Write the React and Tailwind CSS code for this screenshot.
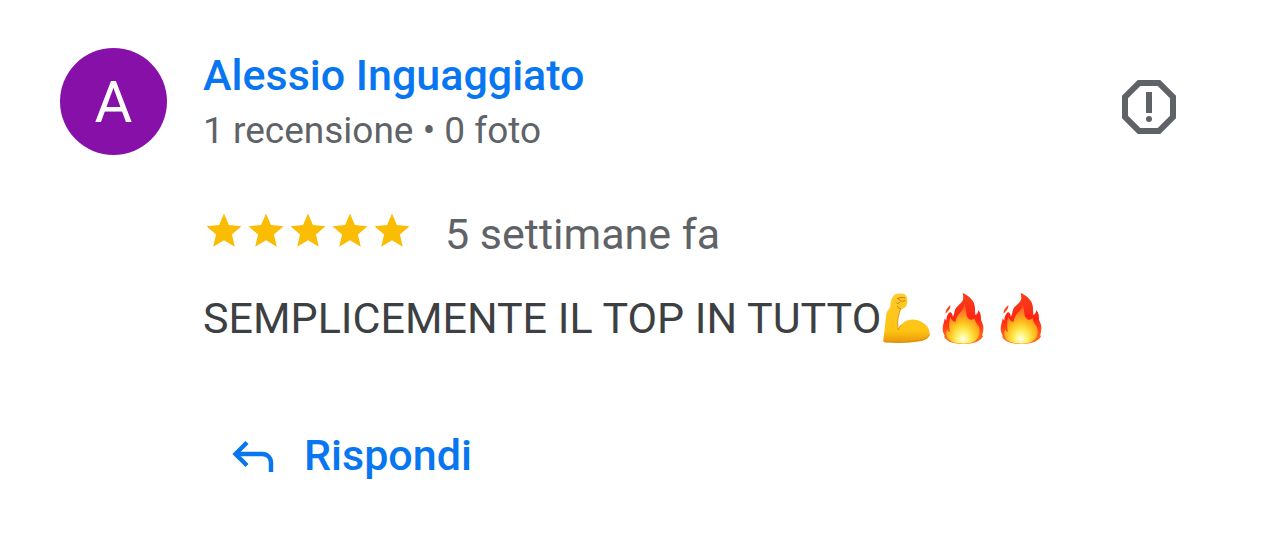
const review = {
  author: 'Alessio Inguaggiato',
  stats: '1 recensione • 0 foto',
  rating: 5,
  date: '5 settimane fa',
  text: 'SEMPLICEMENTE IL TOP IN TUTTO',
}

function StarIcon() {
  return (
    <svg viewBox="0 0 24 24" className="size-[42px] shrink-0" fill="#fbbc04" aria-hidden="true">
      <path d="M12 17.27 18.18 21l-1.64-7.03L22 9.24l-7.19-.61L12 2 9.19 8.63 2 9.24l5.46 4.73L5.82 21z" />
    </svg>
  )
}

function ReportIcon() {
  return (
    <svg viewBox="0 0 24 24" className="size-[72px]" fill="currentColor" aria-hidden="true">
      <path d="M15.73 3H8.27L3 8.27v7.46L8.27 21h7.46L21 15.73V8.27L15.73 3zM19 14.9 14.9 19H9.1L5 14.9V9.1L9.1 5h5.8L19 9.1v5.8z" />
      <circle cx="12" cy="16" r="1" />
      <path d="M11 7h2v7h-2z" />
    </svg>
  )
}

function ReplyIcon() {
  return (
    <svg
      viewBox="0 0 42 34"
      className="mt-1 w-[42px] h-[34px]"
      fill="none"
      stroke="currentColor"
      strokeWidth="4.4"
      aria-hidden="true"
    >
      <path d="M15 2.5 3.5 14 15 25.5" />
      <path d="M4 14h26c5.5 0 9 3.5 9 9v9" />
    </svg>
  )
}

function MuscleEmoji() {
  return (
    <svg viewBox="64 30 156 168" className="w-[52px] h-[56px]" role="img" aria-label="Bicipite">
      <defs>
        <linearGradient id="skin" x1="0" y1="0" x2="0" y2="1">
          <stop offset="0" stopColor="#ffcb2a" />
          <stop offset="0.75" stopColor="#ffc413" />
          <stop offset="1" stopColor="#e8960c" />
        </linearGradient>
      </defs>
      <path
        d="M103 46c5-5 13-7 20-5 9-1 16 3 18 10 3 9 3 19-1 26-4 7-11 9-17 10-3 13-9 26-9 39 0 9 0 16 1 23 7-17 20-28 38-30 28-2 54 15 57 39 1 16-11 22-30 26-34 6-76 6-105 3-4 0-5-4-4-9 5-27 6-57 9-77 2-8 8-14 12-21 0-13 3-26 11-34z"
        fill="url(#skin)"
      />
      <path
        d="M122 89c-4 13-8 24-8 37 0 9 0 17 1 24 3-6 5-10 8-14M75 185c32 3 75 2 104-4 17-3 27-8 30-17"
        fill="none"
        stroke="#d98a0b"
        strokeWidth="2.5"
        strokeLinecap="round"
      />
      <path
        d="M113 56c7-4 15-4 23-2M115 56l10 8 11-2M110 68c4 5 7 2 10-2M124 87c-5-1-9-4-11-8"
        fill="none"
        stroke="#b96d05"
        strokeWidth="2.5"
        strokeLinecap="round"
        strokeLinejoin="round"
      />
    </svg>
  )
}

function FireEmoji() {
  return (
    <svg viewBox="240 30 174 168" className="w-[58px] h-[56px]" role="img" aria-label="Fuoco">
      <defs>
        <linearGradient id="flame" x1="0" y1="0" x2="0" y2="1">
          <stop offset="0" stopColor="#f4421c" />
          <stop offset="0.5" stopColor="#ff2414" />
          <stop offset="1" stopColor="#ff7a1c" />
        </linearGradient>
        <radialGradient id="glow" cx="0.5" cy="0.88" r="0.8">
          <stop offset="0" stopColor="#fffef0" />
          <stop offset="0.22" stopColor="#fff36a" />
          <stop offset="0.5" stopColor="#ffc61f" />
          <stop offset="0.8" stopColor="#ff8420" />
          <stop offset="1" stopColor="#ff5a1e" />
        </radialGradient>
      </defs>
      <path
        d="M308 38c13 7 29 17 34 32 5 13 2 25 4 35 5-1 8-7 9-14 8 8 8 18 8 29 4 9 8 16 7 27-1 9-2 15-4 21l4-2c-4 13-17 20-31 23-20 5-42 4-61-1-13-3-22-9-27-20l5 2c-4-7-8-14-8-23 0-12 5-20 6-32l5 7c0-12 4-21 11-26 6 2 8 7 8 14 6-6 4-15 8-23 5-10 19-17 23-28 2-7 0-14-1-21z"
        fill="url(#flame)"
      />
      <path d="M271 75c1 9-3 15-9 20l-5 6c-1-11 6-18 14-26z" fill="#fb421c" />
      <path
        d="M313 72c9 17 2 33 12 43 6 7 12 5 19 0 1 12 9 18 13 27 6 17 0 36-19 45-17 6-43 5-60-1-18-8-23-22-17-38 2 5 5 7 9 8-3-13-4-30 1-46 4 12 10 17 16 15 1-12 6-20 14-28 7-7 12-15 12-25z"
        fill="url(#glow)"
      />
    </svg>
  )
}

function App() {
  return (
    <main className="min-h-screen bg-white font-['Roboto',sans-serif] text-[#5f6368]">
      <article className="flex items-start gap-9 pl-[60px] pr-[95px] pt-12">
        <div className="flex size-[107px] shrink-0 items-center justify-center rounded-full bg-[#8610a8] text-[58px] leading-none text-white">
          A
        </div>

        <div className="min-w-0 flex-1">
          <header className="flex items-start justify-between">
            <div>
              <h1 className="text-[43px] leading-[54px] font-medium text-[#0875f1]">
                <a href="#profilo">{review.author}</a>
              </h1>
              <p className="text-[37px] leading-[58px]">{review.stats}</p>
            </div>
            <button type="button" aria-label="Segnala recensione" className="mt-[23px]">
              <ReportIcon />
            </button>
          </header>

          <div className="mt-[46px] flex items-start gap-8">
            <div className="flex pt-1" role="img" aria-label={`${review.rating} stelle su 5`}>
              {Array.from({ length: review.rating }, (_, i) => (
                <StarIcon key={i} />
              ))}
            </div>
            <p className="text-[43px] leading-[56px]">{review.date}</p>
          </div>

          <div className="mt-[26px] flex flex-wrap items-center">
            <p className="text-[43px] leading-[60px] text-[#3c4043]">{review.text}</p>
            <div className="flex">
              <MuscleEmoji />
              <div className="ml-[7px] flex">
                <FireEmoji />
                <FireEmoji />
              </div>
            </div>
          </div>

          <button
            type="button"
            className="mt-[77px] ml-[29px] flex items-center gap-[30px] text-[43px] leading-[60px] font-medium text-[#0875f1]"
          >
            <ReplyIcon />
            Rispondi
          </button>
        </div>
      </article>
    </main>
  )
}

export default App
